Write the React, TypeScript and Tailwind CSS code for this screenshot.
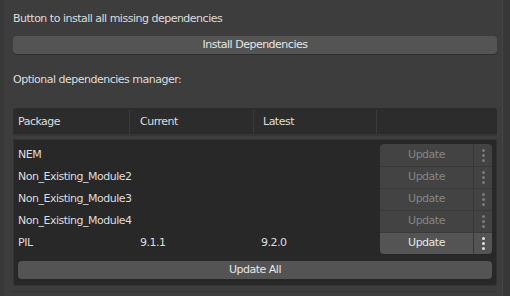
const rows = [
  { name: "NEM", current: "", latest: "", enabled: false },
  { name: "Non_Existing_Module2", current: "", latest: "", enabled: false },
  { name: "Non_Existing_Module3", current: "", latest: "", enabled: false },
  { name: "Non_Existing_Module4", current: "", latest: "", enabled: false },
  { name: "PIL", current: "9.1.1", latest: "9.2.0", enabled: true },
];

function Dots({ dim }: { dim: boolean }) {
  return (
    <div className="flex flex-col items-center justify-center gap-[2px]">
      {[0, 1, 2].map((i) => (
        <span
          key={i}
          className={`block w-[3px] h-[3px] rounded-full ${dim ? "bg-[#7a7a7a]" : "bg-[#e0e0e0]"}`}
        />
      ))}
    </div>
  );
}

export default function App() {
  return (
    <div
      className="w-[510px] h-[296px] bg-[#3d3d3d] text-[#dedede] text-[11px] tracking-[-0.5px] flex overflow-hidden"
      style={{ fontFamily: '"DejaVu Sans", sans-serif' }}
    >
      <div className="w-[4px] bg-[#393939]" />
      <div className="flex-1 flex flex-col pl-[9px] pr-[5px]">
        <div className="h-[14px] mt-[12px] leading-[14px]">Button to install all missing dependencies</div>
        <button className="mt-[10px] h-[18px] rounded-[4px] bg-[#545454] text-[#e6e6e6] leading-[18px] text-center shadow-[0_1px_0_#2e2e2e]">
          Install Dependencies
        </button>
        <div className="mt-[19px] h-[14px] leading-[14px]">Optional dependencies manager:</div>

        <div className="mt-[21px] h-[28px] pt-[2px] bg-[#2c2c2c] rounded-t-[3px] flex items-center border-b-[2px] border-[#363636]">
          <div className="w-[117px] h-full pl-[5px] flex items-center border-r border-[#3a3a3a]">Package</div>
          <div className="w-[124px] h-full pl-[10px] flex items-center border-r border-[#3a3a3a]">Current</div>
          <div className="w-[123px] h-full pl-[9px] flex items-center border-r border-[#3a3a3a]">Latest</div>
          <div className="flex-1" />
        </div>

        <div className="mt-[3px] h-[147px] bg-[#282828] rounded-b-[3px] border border-[#333333] px-[4px] pt-[4px] flex flex-col">
          <div className="flex flex-col">
            {rows.map((r, i) => (
              <div key={r.name} className="flex items-center h-[22px]">
                <div className="w-[122px]">{r.name}</div>
                <div className="w-[121px]">{r.current}</div>
                <div className="flex-1">{r.latest}</div>
                <div
                  className={`w-[112px] h-full flex ${r.enabled ? "bg-[#545454] text-[#e6e6e6]" : "bg-[#434343] text-[#858585]"} ${
                    i === 0 ? "rounded-t-[4px]" : ""
                  } ${i === rows.length - 1 ? "rounded-b-[4px]" : ""} ${i > 0 ? "border-t border-[#3a3a3a]" : ""}`}
                >
                  <div className="flex-1 flex items-center justify-center border-r border-[#3a3a3a]">Update</div>
                  <div className="w-[18px] flex items-center justify-center">
                    <Dots dim={!r.enabled} />
                  </div>
                </div>
              </div>
            ))}
          </div>
          <button className="mt-[7px] h-[18px] rounded-[4px] bg-[#545454] text-[#e6e6e6] leading-[18px] text-center">
            Update All
          </button>
        </div>
        <div className="mt-[5px] h-[1px] bg-[#333333]" />
      </div>
      <div className="w-[8px] bg-[#383838] border-l border-[#444444]" />
    </div>
  );
}
